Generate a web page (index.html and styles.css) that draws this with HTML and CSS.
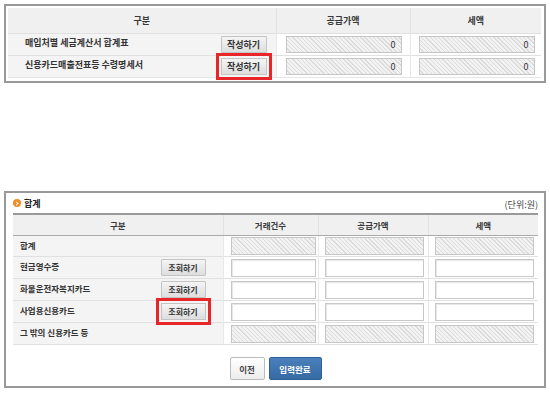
FILE: index.html
```html
<!DOCTYPE html>
<html>
 <head>
 <meta charset="UTF-8">
 <title>신용카드매출전표등 수령명세서</title>
 <link rel="stylesheet" href="styles.css">
 </head>

 <body>

  <!-- 상단: 작성 대상 서식 -->
  <div class="box box_top">
   <table class="grid grid_top">
    <colgroup><col class="w_gubun"><col class="w_amt"><col class="w_tax"></colgroup>
    <tr class="head"><th>구분</th><th>공급가액</th><th>세액</th></tr>
    <tr>
     <td class="lab"><div class="lab_row"><span>매입처별 세금계산서 합계표</span><button class="btn">작성하기</button></div></td>
     <td class="fld_amt"><input class="fld ro" value="0" readonly></td>
     <td class="fld_tax"><input class="fld ro" value="0" readonly></td>
    </tr>
    <tr>
     <td class="lab"><div class="lab_row"><span>신용카드매출전표등 수령명세서</span><button class="btn mark">작성하기</button></div></td>
     <td class="fld_amt"><input class="fld ro" value="0" readonly></td>
     <td class="fld_tax"><input class="fld ro" value="0" readonly></td>
    </tr>
   </table>
  </div>

  <div class="spacer"></div>

  <!-- 하단: 합계 -->
  <div class="box box_sum">
   <div class="sum_head">
    <span class="sum_title"><i class="dot"></i>합계</span>
    <span class="unit">(단위:원)</span>
   </div>
   <table class="grid grid_sum">
    <colgroup><col class="s_gubun"><col class="s_cnt"><col class="s_amt"><col class="s_tax"></colgroup>
    <tr class="head"><th>구분</th><th>거래건수</th><th>공급가액</th><th>세액</th></tr>
    <tr class="r_total">
     <td class="lab"><div class="lab_row"><span>합계</span></div></td>
     <td class="c_cnt"><input class="fld ro" readonly></td>
     <td class="c_amt"><input class="fld ro" readonly></td>
     <td class="c_tax"><input class="fld ro" readonly></td>
    </tr>
    <tr>
     <td class="lab"><div class="lab_row"><span>현금영수증</span><button class="btn">조회하기</button></div></td>
     <td class="c_cnt"><input class="fld"></td>
     <td class="c_amt"><input class="fld"></td>
     <td class="c_tax"><input class="fld"></td>
    </tr>
    <tr>
     <td class="lab"><div class="lab_row"><span>화물운전자복지카드</span><button class="btn">조회하기</button></div></td>
     <td class="c_cnt"><input class="fld"></td>
     <td class="c_amt"><input class="fld"></td>
     <td class="c_tax"><input class="fld"></td>
    </tr>
    <tr>
     <td class="lab"><div class="lab_row"><span>사업용신용카드</span><button class="btn mark">조회하기</button></div></td>
     <td class="c_cnt"><input class="fld"></td>
     <td class="c_amt"><input class="fld"></td>
     <td class="c_tax"><input class="fld"></td>
    </tr>
    <tr>
     <td class="lab"><div class="lab_row"><span>그 밖의 신용카드 등</span></div></td>
     <td class="c_cnt"><input class="fld ro" readonly></td>
     <td class="c_amt"><input class="fld ro" readonly></td>
     <td class="c_tax"><input class="fld ro" readonly></td>
    </tr>
   </table>
   <div class="actions">
    <button class="btn_prev">이전</button>
    <button class="btn_done">입력완료</button>
   </div>
  </div>

 </body>
</html>
```

FILE: styles.css
```css
BODY   { margin: 0; padding: 0; background: #fff; color: #333;
         font-family: "Noto Sans CJK KR", "Noto Sans", sans-serif; }

.box       { box-sizing: border-box; width: 542px; margin-left: 4px;
             border: 2px solid #999; background: #fff; }
.box_top   { margin-top: 4px; padding: 2px 3px 3px 2px; }
.box_sum   { padding: 0 6px 6px 7px; }
.spacer    { height: 108px; }

TABLE.grid { border-collapse: collapse; table-layout: fixed; width: 100%; }
.grid TH   { background: #f0f0f0; font-weight: bold; text-align: center;
             color: #3a3a3a; padding: 0; border-left: 1px solid #e2e2e2; }
.grid TH:first-child { border-left: 0; }
.grid TD   { padding: 0; border-top: 1px solid #e0e0e0; border-left: 1px solid #e8e8e8;
             vertical-align: middle; }
.grid TD.lab { background: #f4f4f4; border-left: 0; }

/* 상단 표 */
.grid_top        { font-size: 9px; }
.grid_top .head  { height: 25px; }
.grid_top TR     { height: 22px; }
.grid_top TR:last-child TD { border-bottom: 1px solid #e6e6e6; }
.w_gubun { width: 268px; }
.w_amt   { width: 134px; }
.w_tax   { width: 131px; }
.grid_top .lab_row { padding: 0 9px 0 17px; }
.fld_amt { padding-left: 9px !important; }
.fld_tax { padding-left: 8px !important; }
.grid_top .fld     { width: 116px; height: 17px; font-size: 9px; }

.lab_row       { display: flex; align-items: center; justify-content: space-between; }
.lab_row SPAN  { font-weight: bold; color: #333; margin-top: -3px; }

.btn  { font-family: inherit; font-size: inherit; color: #333; font-weight: bold;
        height: 17px; width: 46px; padding: 0; border: 1px solid #c4c4c4; border-radius: 1px;
        background: linear-gradient(#f4f4f4, #dedede); }
.btn.mark { border-radius: 0; outline: 3px solid #e8262a; outline-offset: 2px; }

.fld  { box-sizing: border-box; display: block; margin: 0; font-family: inherit;
        font-size: 8px; color: #333; text-align: right; padding: 0 5px 0 0;
        border: 1px solid #c8c8c8; background: #fff;
        box-shadow: inset 1px 1px 1px #e6e6e6; }
.fld.ro { border-color: #c6c6c6; box-shadow: none;
          background: repeating-linear-gradient(45deg, #f2f2f2 0 2px, #dcdcdc 2px 3px); }

/* 하단 합계 */
.sum_head  { height: 19px; display: flex; align-items: center; justify-content: space-between;
             font-size: 9px; padding-top: 1px; }
.sum_title { display: flex; align-items: center; gap: 3px; font-weight: bold; color: #222; }
.dot       { display: inline-block; width: 8px; height: 8px; border-radius: 50%;
             background: #f28c28; position: relative; }
.dot::after { content: ""; position: absolute; left: 2px; top: 2.5px; width: 2px; height: 2px;
              border-top: 1px solid #fff; border-right: 1px solid #fff; transform: rotate(45deg); }
.unit      { color: #444; padding-top: 2px; }

.grid_sum        { font-size: 8.5px; border-top: 2px solid #9a9a9a; }
.grid_sum .head  { height: 22px; }
.grid_sum .head TH { border-bottom: 1px solid #aaa; }
.grid_sum TR     { height: 22px; }
.grid_sum TR.r_total { height: 21px; }
.grid_sum TR:last-child TD { border-bottom: 1px solid #e0e0e0; }
.s_gubun { width: 210px; }
.s_cnt   { width: 95px; }
.s_amt   { width: 110px; }
.s_tax   { width: 110px; }
.grid_sum .lab_row { padding: 0 17px 0 7px; }
.c_cnt   { padding-left: 7px !important; }
.c_amt   { padding-left: 6px !important; }
.c_tax   { padding-left: 6px !important; }
.c_cnt .fld { width: 85px; height: 18px; }
.c_amt .fld, .c_tax .fld { width: 99px; height: 18px; }
.grid_sum .btn   { width: 45px; font-size: 8px; }

.actions   { display: flex; justify-content: center; gap: 4px; margin-top: 12px; }
.btn_prev  { font-family: inherit; font-size: 8.5px; font-weight: bold; color: #444;
             width: 35px; height: 23px; padding: 0; border: 1px solid #bbb; border-radius: 2px;
             background: linear-gradient(#fff, #ececec); }
.btn_done  { font-family: inherit; font-size: 8.5px; font-weight: bold; color: #fff;
             width: 53px; height: 23px; padding: 0; border: 1px solid #2f5f93; border-radius: 2px;
             background: linear-gradient(#4a80bb, #356aa3); }
```
